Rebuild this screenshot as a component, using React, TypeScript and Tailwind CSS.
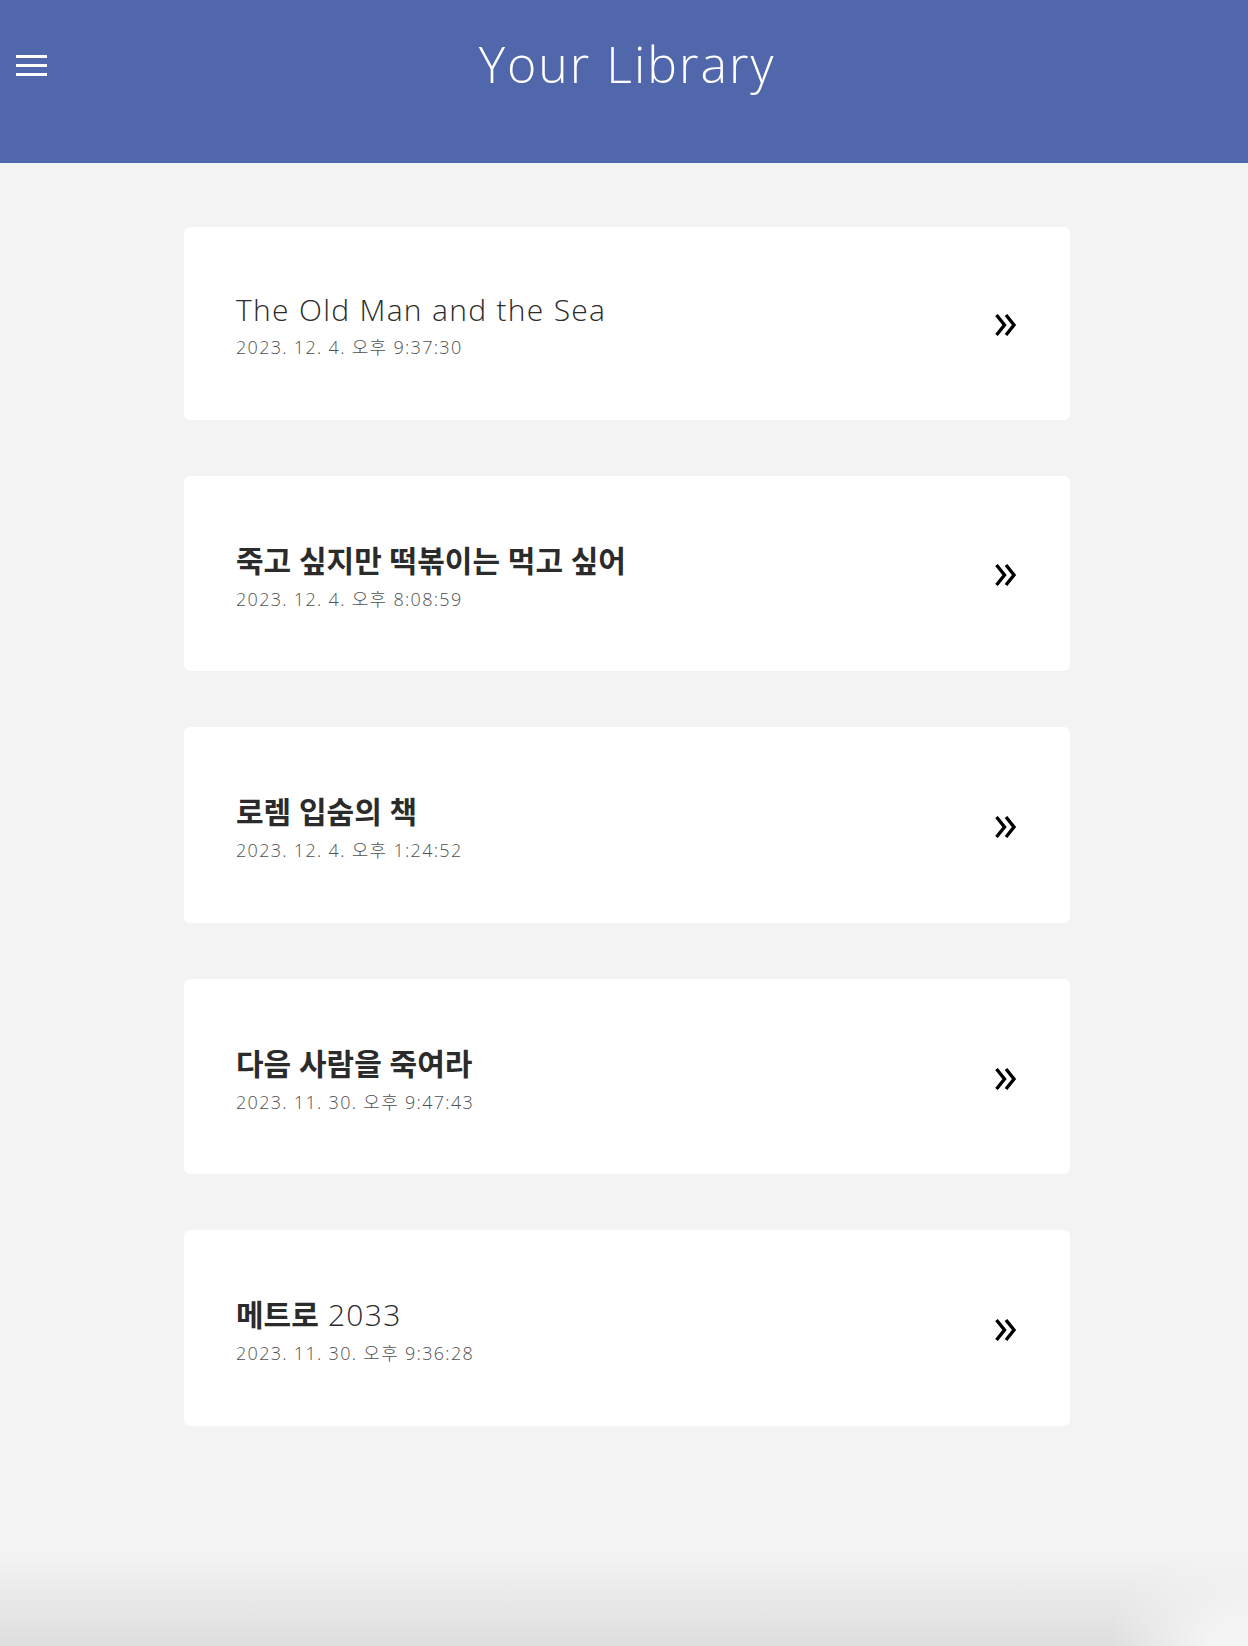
import React from "react";

type Book = { title: React.ReactNode; date: string; ko?: boolean };

const books: Book[] = [
  { title: <span className="tracking-[1.3px]">The Old Man and the Sea</span>, date: "2023. 12. 4. 오후 9:37:30" },
  {
    title: <span className="font-bold">죽고 싶지만 떡볶이는 먹고 싶어</span>,
    date: "2023. 12. 4. 오후 8:08:59",
    ko: true,
  },
  {
    title: <span className="font-bold">로렘 입숨의 책</span>,
    date: "2023. 12. 4. 오후 1:24:52",
    ko: true,
  },
  {
    title: <span className="font-bold">다음 사람을 죽여라</span>,
    date: "2023. 11. 30. 오후 9:47:43",
    ko: true,
  },
  {
    title: (
      <>
        <span className="font-bold">메트로</span>
        <span className="tracking-[1.3px]"> 2033</span>
      </>
    ),
    date: "2023. 11. 30. 오후 9:36:28",
    ko: true,
  },
];

function Chevrons() {
  return (
    <svg width="24" height="24" viewBox="0 0 24 24" fill="none" className="shrink-0">
      <polyline points="2.5,2 10.5,12 2.5,22" stroke="#000" strokeWidth="3.4" strokeLinejoin="miter" />
      <polyline points="12,2 20,12 12,22" stroke="#000" strokeWidth="3.4" strokeLinejoin="miter" />
    </svg>
  );
}

export default function App() {
  const font = { fontFamily: '"Open Sans", "Noto Sans CJK KR", sans-serif' };
  return (
    <div className="min-h-[1646px] w-full flex flex-col bg-[#f3f3f3]" style={font}>
      <header className="h-[163px] bg-[#5167ac] grid grid-cols-[1fr_auto_1fr] items-start pt-[34px]">
        <div className="pl-[16px] pt-[21px] flex flex-col gap-[6px]">
          <span className="block w-[31px] h-[3px] bg-white" />
          <span className="block w-[31px] h-[3px] bg-white" />
          <span className="block w-[31px] h-[3px] bg-white" />
        </div>
        <h1 className="text-white text-[50px] leading-[1.2] font-light tracking-[2px] pl-[6px]">Your Library</h1>
        <div />
      </header>

      <main className="flex flex-col gap-[56px] pt-[64px] pl-[184px]">
        {books.map((b, i) => (
          <div
            key={i}
            className="w-[886px] bg-white rounded-[6px] flex items-center justify-between pl-[52px] pr-[52px] pt-[65px] pb-[61px]"
          >
            <div className="flex flex-col gap-[9px]">
              <div
                className={`text-[30px] font-light text-[#2b2b2b] ${b.ko ? "leading-[39px]" : "leading-[36px]"}`}
              >
                {b.title}
              </div>
              <div className="text-[18px] leading-[1.2] font-light tracking-[1.3px] text-[#505050]">{b.date}</div>
            </div>
            <Chevrons />
          </div>
        ))}
      </main>

      <div className="flex-1" />
      <div className="h-[90px] bg-[radial-gradient(ellipse_140px_110px_at_100%_100%,#f3f3f3_30%,rgba(243,243,243,0)_100%),linear-gradient(to_bottom,#f3f3f3,#dedede)]" />
    </div>
  );
}
